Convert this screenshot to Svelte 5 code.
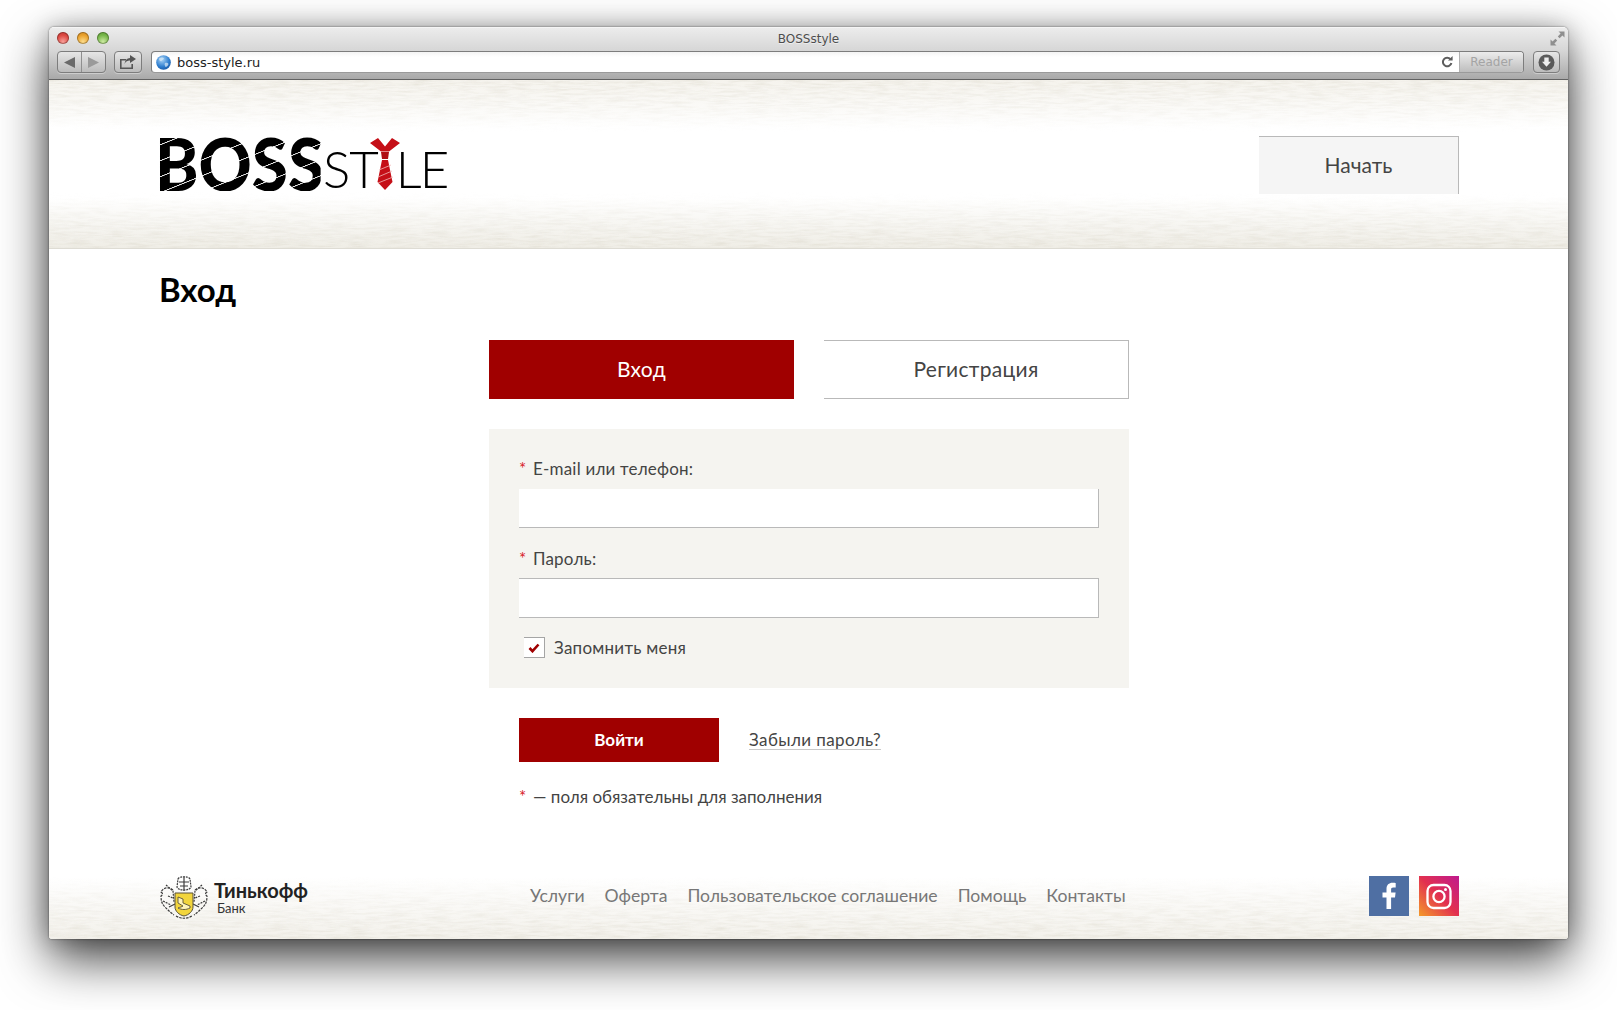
<script>
  // footer navigation
  const links = ['Услуги', 'Оферта', 'Пользовательское соглашение', 'Помощь', 'Контакты'];

  let activeTab = 'login';
  let remember = true;
</script>

<svg class="defs" width="0" height="0" aria-hidden="true">
  <filter id="paper" x="0" y="0" width="100%" height="100%">
    <feTurbulence type="fractalNoise" baseFrequency="0.05 0.45" numOctaves="3" seed="4" />
    <feColorMatrix type="matrix" values="0 0 0 0 0.7  0 0 0 0 0.67  0 0 0 0 0.58  0.9 0 0 0 -0.34" />
  </filter>
  <linearGradient id="fadeTop" x1="0" y1="0" x2="0" y2="1">
    <stop offset="0" stop-color="#fff" />
    <stop offset="1" stop-color="#000" />
  </linearGradient>
  <linearGradient id="fadeBottom" x1="0" y1="0" x2="0" y2="1">
    <stop offset="0" stop-color="#000" />
    <stop offset="1" stop-color="#fff" />
  </linearGradient>
  <mask id="maskTop" maskContentUnits="objectBoundingBox"><rect width="1" height="1" fill="url(#fadeTop)" /></mask>
  <mask id="maskBottom" maskContentUnits="objectBoundingBox"><rect width="1" height="1" fill="url(#fadeBottom)" /></mask>
  <linearGradient id="igGrad" x1="0" y1="1" x2="1" y2="0">
    <stop offset="0" stop-color="#f49a2a" />
    <stop offset="0.5" stop-color="#e2304f" />
    <stop offset="1" stop-color="#bf1a8f" />
  </linearGradient>
  <radialGradient id="globeGrad" cx="0.4" cy="0.3" r="0.8">
    <stop offset="0" stop-color="#a9d4f7" />
    <stop offset="0.6" stop-color="#2f7fd0" />
    <stop offset="1" stop-color="#12509c" />
  </radialGradient>
</svg>

<div class="desktop">
  <div class="window">
    <div class="chrome">
      <div class="titlerow">
        <div class="lights">
          <span class="light red"></span>
          <span class="light yellow"></span>
          <span class="light green"></span>
        </div>
        <span class="title">BOSSstyle</span>
        <svg class="expand" width="15" height="15" viewBox="0 0 15 15">
          <path d="M8.500 0.500h6v6l-2.100-2.100-2.800 2.800-1.800-1.800 2.800-2.800z" fill="#8f8f8f" />
          <path d="M6.500 14.500h-6v-6l2.100 2.100 2.800-2.800 1.800 1.800-2.800 2.800z" fill="#8f8f8f" />
        </svg>
      </div>
      <div class="toolrow">
        <div class="btn nav">
          <span class="half">
            <svg width="13" height="11" viewBox="0 0 13 11"><path d="M1 5.500 12 0v11z" fill="#6a6a6a" /></svg>
          </span>
          <span class="half">
            <svg width="13" height="11" viewBox="0 0 13 11"><path d="M12 5.500 1 0v11z" fill="#9a9a9a" /></svg>
          </span>
        </div>
        <div class="btn share">
          <svg width="18" height="14" viewBox="0 0 18 14">
            <path d="M1 4h6v1.600H2.600v6.800h9.800V9H14v5H1z" fill="#555" />
            <path d="M11 0l6 4-6 4V5.600C8.500 5.600 6.800 6.600 5.500 9c.3-3.600 2.300-5.800 5.500-6.100z" fill="#555" />
          </svg>
        </div>
        <div class="address">
          <svg class="globe" width="15" height="15" viewBox="0 0 15 15">
            <circle cx="7.500" cy="7.500" r="7.300" fill="url(#globeGrad)" />
            <path d="M3 3.500c2-1.500 4-1.500 5 0-.5 1.500-2 1-2.500 2.500-1 1-2.500-.5-2.500-2.500zM9 8c1.500-.5 3 0 3.500 1-.5 2-2 3-3 3-.5-1.500-1.500-2.500-.5-4z" fill="#d7e8f6" opacity=".75" />
          </svg>
          <span class="url">boss-style.ru</span>
          <svg class="reload" width="12" height="12" viewBox="0 0 12 12">
            <path d="M9.500 3.200A4.300 4.300 0 1 0 10.400 7" fill="none" stroke="#5d5d5d" stroke-width="2" />
            <path d="M7 4.400h4.600V0z" fill="#5d5d5d" />
          </svg>
          <span class="reader">Reader</span>
        </div>
        <div class="btn download">
          <svg width="17" height="17" viewBox="0 0 17 17">
            <circle cx="8.500" cy="8.500" r="8" fill="#5a5a5a" />
            <path d="M6.300 3.500h4.400v4.300h2.300l-4.500 5-4.500-5h2.300z" fill="#ededed" />
          </svg>
        </div>
      </div>
    </div>

    <div class="page">
      <header class="top">
        <svg class="paper" width="100%" height="52" style="top: 0"><rect width="100%" height="100%" filter="url(#paper)" mask="url(#maskTop)" /></svg>
        <svg class="paper" width="100%" height="56" style="bottom: 0"><rect width="100%" height="100%" filter="url(#paper)" mask="url(#maskBottom)" /></svg>
        <a class="logo" href="#top">
          <span class="boss">BOSS</span>
          <span class="style">ST</span>
          <svg class="tie" width="30" height="52" viewBox="0 0 30 52">
            <path d="M0 5 8 0l7 8.500L22 0l8 5-11 8.500h-8z" fill="#c50f17" />
            <path d="M11 14h8l-1 7h-6z" fill="#b00d14" />
            <path d="M12 22h6l4.500 22-7.500 8-7.500-8z" fill="#c50f17" />
            <path d="M9 32l12-5M8 39l14-6M8 45l15-6" stroke="#f3b8b8" stroke-width=".8" fill="none" />
          </svg>
          <span class="style le">LE</span>
        </a>
        <button class="start" type="button">Начать</button>
      </header>

      <main class="content">
        <h1>Вход</h1>
        <div class="auth">
          <div class="tabs">
            <button class="tab" class:active={activeTab === 'login'} type="button" onclick={() => (activeTab = 'login')}>Вход</button>
            <button class="tab" class:active={activeTab === 'register'} type="button" onclick={() => (activeTab = 'register')}>Регистрация</button>
          </div>

          <form onsubmit={(e) => e.preventDefault()}>
            <div class="panel">
              <label class="field">
                <span class="label"><i>*</i>E-mail или телефон:</span>
                <input class="first" type="text" />
              </label>
              <label class="field">
                <span class="label"><i>*</i>Пароль:</span>
                <input class="second" type="password" />
              </label>
              <label class="remember">
                <input type="checkbox" bind:checked={remember} />
                <span class="box">
                  {#if remember}
                    <svg width="12" height="10" viewBox="0 0 12 10"><path d="M1.500 5 4.500 8.200 10.500 1.500" fill="none" stroke="#a00000" stroke-width="2.600" /></svg>
                  {/if}
                </span>
                Запомнить меня
              </label>
            </div>

            <div class="actions">
              <button class="submit" type="submit">Войти</button>
              <a class="forgot" href="#forgot">Забыли пароль?</a>
            </div>
            <p class="note"><i>*</i>— поля обязательны для заполнения</p>
          </form>
        </div>
      </main>

      <footer>
        <svg class="paper" width="100%" height="62" style="bottom: 0"><rect width="100%" height="100%" filter="url(#paper)" mask="url(#maskBottom)" /></svg>
        <div class="bank">
          <svg class="crest" width="50" height="44" viewBox="0 0 50 44">
            <g fill="none" stroke="#3c3c3c" stroke-width="1.200">
              <path d="M14 14c-5-4-10-2-12 2 2 1 2 3 0 4 0 5 1 8 4 11 3 3 6 6 9 8" stroke-dasharray="2.500 1" />
              <path d="M36 14c5-4 10-2 12 2-2 1-2 3 0 4 0 5-1 8-4 11-3 3-6 6-9 8" stroke-dasharray="2.500 1" />
              <path d="M7 9l7 6 1 11M43 9l-7 6-1 11M4 25l8 4M46 25l-8 4M9 20l5 2M41 20l-5 2" stroke-dasharray="2 1" />
              <path d="M10 31l6-3M40 31l-6-3" />
              <path d="M19 3c1-3 11-3 12 0l1 8c-1 4-13 4-14 0z" stroke-dasharray="2 .8" />
              <path d="M20 6h10M21 10h8M25 1v14" />
              <path d="M17 40c5 3 11 3 16 0" stroke-dasharray="2.500 1" />
            </g>
            <path d="M16 17h18v14c0 4-4 8-9 9-5-1-9-5-9-9z" fill="#f2d53c" stroke="#58513a" stroke-width="1" />
            <path d="M19 21l5 2v4l7 3v2c-4 2-8 2-12 0 2-1 4-1 5-2l-5-3z" fill="#fff4b8" stroke="#58513a" stroke-width=".9" />
          </svg>
          <div class="bankname">
            <strong>Тинькофф</strong>
            <span>Банк</span>
          </div>
        </div>
        <nav>
          {#each links as link}
            <a href="#link">{link}</a>
          {/each}
        </nav>
        <div class="social">
          <a class="fb" href="#fb" aria-label="Facebook">
            <svg width="40" height="40" viewBox="0 0 40 40">
              <path d="M17.500 33V21.500h-4v-5h4v-3.600c0-4 2.400-6.100 6-6.100 1.600 0 2.700.1 3.200.2v4.500h-2.400c-1.800 0-2.200.9-2.200 2.200v2.800h4.500l-.6 5h-3.900V33z" fill="#fff" />
            </svg>
          </a>
          <a class="ig" href="#ig" aria-label="Instagram">
            <svg width="40" height="40" viewBox="0 0 40 40">
              <rect width="40" height="40" fill="url(#igGrad)" />
              <rect x="8.500" y="9" width="23" height="23" rx="6" fill="none" stroke="#fff" stroke-width="2.300" />
              <circle cx="20" cy="20.500" r="5.600" fill="none" stroke="#fff" stroke-width="2.300" />
              <circle cx="26.500" cy="13.500" r="1.500" fill="#fff" />
            </svg>
          </a>
        </div>
      </footer>
    </div>
  </div>
</div>

<style>
  :global(body) {
    background: #fff;
    font-family: 'Lato', 'Liberation Sans', sans-serif;
  }

  .defs {
    position: absolute;
  }

  .desktop {
    height: 1010px;
    padding: 27px 49px 0;
    box-sizing: border-box;
    overflow: hidden;
  }

  .window {
    height: 912px;
    display: flex;
    flex-direction: column;
    border-radius: 5px 5px 3px 3px;
    box-shadow: 0 0 2px rgba(0, 0, 0, 0.6), 0 0 22px rgba(0, 0, 0, 0.22), 0 20px 50px rgba(0, 0, 0, 0.75);
    background: #fff;
    overflow: hidden;
  }

  /* browser chrome */
  .chrome {
    height: 53px;
    flex: none;
    box-sizing: border-box;
    background: linear-gradient(#ececec, #d6d6d6 45%, #a9a9a9);
    border-bottom: 1px solid #626262;
    border-top: 1px solid #f5f5f5;
    padding: 0 8px;
    font-family: 'DejaVu Sans', sans-serif;
  }

  .titlerow {
    height: 21px;
    margin-bottom: 2px;
    display: flex;
    align-items: center;
    justify-content: center;
    position: relative;
  }

  .lights {
    position: absolute;
    left: 0;
    top: 4px;
    display: flex;
    gap: 8px;
  }

  .light {
    width: 12px;
    height: 12px;
    border-radius: 50%;
    box-shadow: inset 0 0 0 1px rgba(0, 0, 0, 0.28);
  }

  .red {
    background: radial-gradient(circle at 50% 80%, #f8a09a, #dd4b44 55%, #b8302c);
  }

  .yellow {
    background: radial-gradient(circle at 50% 80%, #fbdc8c, #eba32f 55%, #c67f1d);
  }

  .green {
    background: radial-gradient(circle at 50% 80%, #cdeaa2, #79b84c 55%, #55932f);
  }

  .title {
    font-size: 12px;
    color: #4d4d4d;
    text-shadow: 0 1px 0 rgba(255, 255, 255, 0.5);
  }

  .expand {
    position: absolute;
    right: -5px;
    top: 3px;
  }

  .toolrow {
    height: 22px;
    display: flex;
    align-items: stretch;
    gap: 8px;
  }

  .btn {
    box-sizing: border-box;
    border: 1px solid #7d7d7d;
    border-radius: 4px;
    background: linear-gradient(#e6e6e6, #bcbcbc);
    box-shadow: 0 1px 0 rgba(255, 255, 255, 0.35);
    display: flex;
    align-items: center;
    justify-content: center;
  }

  .nav {
    width: 49px;
  }

  .half {
    flex: 1;
    height: 100%;
    display: flex;
    align-items: center;
    justify-content: center;
  }

  .half + .half {
    border-left: 1px solid #8f8f8f;
  }

  .share {
    width: 28px;
  }

  .address {
    flex: 1;
    display: flex;
    align-items: stretch;
    box-sizing: border-box;
    margin-left: 1px;
    background: linear-gradient(#f4f4f4, #fff 25%);
    border: 1px solid #7d7d7d;
    border-bottom-color: #9a9a9a;
    border-radius: 4px;
    overflow: hidden;
  }

  .globe {
    align-self: center;
    margin-left: 4px;
  }

  .url {
    flex: 1;
    margin-left: 6px;
    font-size: 13px;
    line-height: 22px;
    color: #222;
  }

  .reload {
    align-self: center;
    margin-right: 6px;
  }

  .reader {
    width: 64px;
    box-sizing: border-box;
    text-align: center;
    font-size: 12px;
    line-height: 20px;
    color: #a4a4a4;
    background: linear-gradient(#ececec, #bdbdbd);
    border-left: 1px solid #b0b0b0;
  }

  .download {
    width: 27px;
    margin-left: 1px;
  }

  /* page */
  .page {
    flex: 1;
    display: flex;
    flex-direction: column;
    color: #444;
  }

  .paper {
    position: absolute;
    left: 0;
    pointer-events: none;
  }

  .top {
    position: relative;
    height: 169px;
    flex: none;
    box-sizing: border-box;
    padding: 56px 109px 0 110px;
    display: flex;
    justify-content: space-between;
    align-items: flex-start;
    background: linear-gradient(#f5f3ed, #fff 48px, #fff 118px, #efede6);
    border-bottom: 1px solid #dedcd4;
  }

  .logo {
    position: relative;
    display: flex;
    align-items: flex-end;
    height: 56px;
    margin: -1px 0 0 -4px;
    color: #000;
    text-decoration: none;
  }

  .boss {
    display: block;
    font-weight: 900;
    font-size: 73px;
    line-height: 56px;
    height: 56px;
    width: 184px;
    margin-right: -16px;
    color: transparent;
    background: repeating-linear-gradient(340deg, #000 0, #000 13.6px, #e2e2e2 14.1px, #e2e2e2 14.7px, #000 15px);
    -webkit-background-clip: text;
    background-clip: text;
    transform: scaleX(0.9);
    transform-origin: left center;
  }

  .style {
    font-weight: 300;
    font-size: 51px;
    line-height: 44px;
    color: #000;
    letter-spacing: -1px;
  }

  .tie {
    margin: 0 0 1px -8px;
  }

  .le {
    letter-spacing: -2px;
    margin-left: -4px;
  }

  .start {
    position: relative;
    width: 200px;
    height: 58px;
    box-sizing: border-box;
    background: #f5f5f5;
    border: 0 solid #b9b9b9;
    border-width: 1px 1px 0 0;
    font: 400 21px 'Lato', sans-serif;
    color: #444;
    padding-bottom: 4px;
  }

  .content {
    flex: 1;
    padding: 0 109px 0 110px;
  }

  h1 {
    margin: 19px 0 0;
    font-size: 33px;
    line-height: 42px;
    font-weight: 700;
    color: #000;
  }

  .auth {
    width: 640px;
    margin: 30px auto 0;
  }

  .tabs {
    display: grid;
    grid-template-columns: 305px 305px;
    gap: 30px;
  }

  .tab {
    height: 59px;
    box-sizing: border-box;
    background: #fff;
    border: 0 solid #b9b9b9;
    border-width: 1px 1px 1px 0;
    font: 400 21px 'Lato', sans-serif;
    letter-spacing: 0.3px;
    color: #444;
    padding-bottom: 3px;
  }

  .tab.active {
    background: #a00000;
    border: 0;
    color: #fff;
  }

  .panel {
    margin-top: 30px;
    height: 259px;
    box-sizing: border-box;
    padding: 29px 30px 0;
    background: #f5f4f0;
  }

  .field {
    display: block;
  }

  .label {
    display: block;
    font-size: 17px;
    letter-spacing: 0.2px;
    line-height: 22px;
    color: #444;
  }

  i {
    display: inline-block;
    width: 14px;
    font-style: normal;
    color: #d8222a;
  }

  input[type='text'],
  input[type='password'] {
    display: block;
    width: 580px;
    box-sizing: border-box;
    margin-top: 9px;
    background: #fff;
    border: 0 solid #b9b9b9;
    outline: none;
  }

  input.first {
    height: 39px;
    border-width: 0 1px 1px 0;
    margin-bottom: 20px;
  }

  input.second {
    height: 40px;
    margin-top: 8px;
    border-width: 1px 1px 1px 0;
  }

  .remember {
    display: flex;
    align-items: center;
    margin: 19px 0 0 5px;
    font-size: 17px;
    letter-spacing: 0.25px;
    line-height: 21px;
    color: #444;
  }

  .remember input {
    position: absolute;
    opacity: 0;
  }

  .box {
    width: 21px;
    height: 21px;
    box-sizing: border-box;
    margin-right: 9px;
    background: #fff;
    border: 0 solid #a5a5a5;
    border-width: 1px 1px 1px 0;
    display: flex;
    align-items: center;
    justify-content: center;
  }

  .actions {
    display: flex;
    align-items: center;
    gap: 30px;
    margin: 30px 0 0 30px;
  }

  .submit {
    width: 200px;
    height: 44px;
    background: #a00000;
    border: 0;
    color: #fff;
    font: 700 17px 'Lato', sans-serif;
    padding-bottom: 3px;
  }

  .forgot {
    font-size: 17px;
    letter-spacing: 0.4px;
    line-height: 19px;
    color: #444;
    text-decoration: none;
    border-bottom: 1px solid #c9c9c9;
  }

  .note {
    margin: 24px 0 0 30px;
    font-size: 17px;
    line-height: 22px;
    color: #444;
  }

  footer {
    position: relative;
    height: 84px;
    flex: none;
    box-sizing: border-box;
    padding: 21px 109px 0 110px;
    display: flex;
    align-items: flex-start;
    background: linear-gradient(#fff 22px, #f3f1eb);
  }

  .bank {
    position: relative;
    width: 371px;
    display: flex;
    align-items: flex-start;
    gap: 5px;
    box-sizing: border-box;
  }

  .crest {
    flex: none;
  }

  .bankname {
    display: flex;
    flex-direction: column;
    margin-top: 2px;
  }

  .bankname strong {
    font: 700 20px/24px 'Lato', sans-serif;
    color: #222;
  }

  .bankname span {
    font: 400 13px/13px 'Lato', sans-serif;
    color: #333;
    margin-left: 3px;
  }

  nav {
    position: relative;
    display: flex;
    gap: 20px;
    padding-top: 8px;
  }

  nav a {
    font-size: 17.6px;
    line-height: 24px;
    color: #777;
    text-decoration: none;
  }

  .social {
    position: relative;
    margin-left: auto;
    display: flex;
    gap: 10px;
  }

  .social a {
    display: block;
    width: 40px;
    height: 40px;
  }

  .fb {
    background: #4f6fa3;
  }
</style>
